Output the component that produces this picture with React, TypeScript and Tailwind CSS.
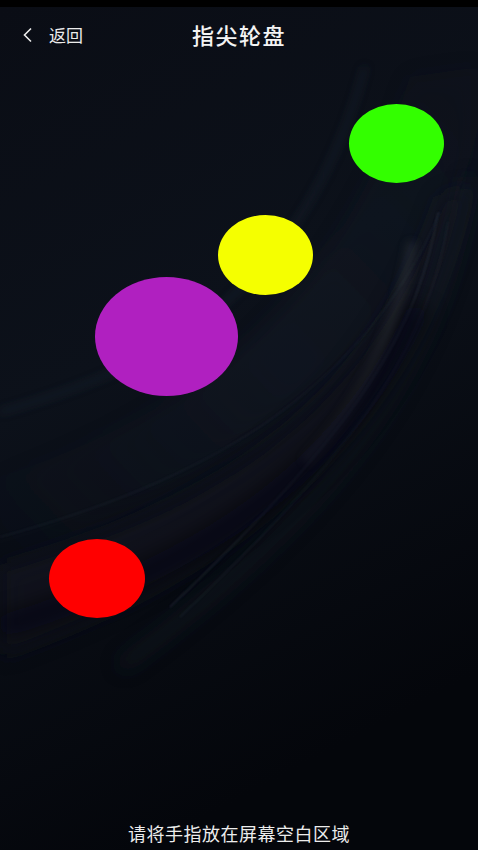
import React from "react";

const circles = [
  { cx: 396.5, cy: 143.5, w: 95, h: 79, color: "bg-[#33ff00]" },
  { cx: 265.5, cy: 255, w: 95, h: 80, color: "bg-[#f5ff00]" },
  { cx: 166.5, cy: 336.5, w: 143, h: 119, color: "bg-[#b020c0]" },
  { cx: 97, cy: 578.5, w: 96, h: 79, color: "bg-[#ff0000]" },
];

function Backdrop() {
  return (
    <svg className="absolute inset-0 w-full h-full" viewBox="0 0 478 843" preserveAspectRatio="none">
      <defs>
        <linearGradient id="bg" x1="0" y1="0" x2="0.3" y2="1">
          <stop offset="0" stopColor="#0a0d15" />
          <stop offset="0.45" stopColor="#0c111a" />
          <stop offset="1" stopColor="#04060b" />
        </linearGradient>
        <linearGradient id="band" x1="0" y1="1" x2="1" y2="0">
          <stop offset="0" stopColor="#1a2230" stopOpacity="0" />
          <stop offset="0.5" stopColor="#1a2230" stopOpacity="0.8" />
          <stop offset="1" stopColor="#141a25" stopOpacity="0.4" />
        </linearGradient>
        <filter id="blur8"><feGaussianBlur stdDeviation="10" /></filter>
        <filter id="blur3"><feGaussianBlur stdDeviation="4" /></filter>
        <filter id="blur1"><feGaussianBlur stdDeviation="1.2" /></filter>
      </defs>
      <rect width="478" height="843" fill="url(#bg)" />
      {/* broad soft bands */}
      <path d="M0 470 C 150 420, 330 330, 410 70 L 478 60 L 478 120 C 430 330, 250 470, 0 560 Z" fill="url(#band)" opacity="0.4" filter="url(#blur8)" />
      <path d="M0 560 C 200 500, 360 420, 440 190 L 470 180 C 420 420, 250 560, 0 650 Z" fill="#121824" opacity="0.55" filter="url(#blur8)" />
      {/* upper thin highlight */}
      <path d="M0 405 C 140 365, 300 300, 365 60" stroke="#232c3a" strokeWidth="4" fill="none" opacity="0.5" filter="url(#blur3)" />
      {/* middle edge */}
      <path d="M0 530 C 200 475, 360 390, 440 205" stroke="#252d3a" strokeWidth="1" fill="none" opacity="0.55" filter="url(#blur1)" />
      {/* bright gray ribbon */}
      <path d="M412 235 C 398 320, 362 395, 305 455" stroke="#373c42" strokeWidth="9" fill="none" opacity="0.45" filter="url(#blur3)" />
      <path d="M438 205 C 420 320, 360 420, 170 600" stroke="#29313c" strokeWidth="1.3" fill="none" opacity="0.7" filter="url(#blur1)" />
      <path d="M448 215 C 430 330, 370 430, 180 610" stroke="#222a35" strokeWidth="1.1" fill="none" opacity="0.6" filter="url(#blur1)" />
      <path d="M470 170 C 440 330, 380 470, 120 660" stroke="#19202b" strokeWidth="12" fill="none" opacity="0.45" filter="url(#blur8)" />
      {/* dark under-shadow */}
      <path d="M0 620 C 200 560, 340 470, 420 300" stroke="#04060a" strokeWidth="22" fill="none" opacity="0.6" filter="url(#blur8)" />
    </svg>
  );
}

export default function App() {
  return (
    <div
      className="w-[478px] h-[850px] bg-black flex flex-col overflow-hidden text-white"
      style={{ fontFamily: '"Noto Sans CJK SC", "Noto Sans", sans-serif' }}
    >
      <div className="h-[7px] bg-black shrink-0" />
      <div className="relative flex-1 flex flex-col">
        <Backdrop />
        <header className="relative h-[54px] mb-[4px] flex items-center pl-[22px]">
          <button className="flex items-center gap-[16px] text-[#ececec]">
            <svg viewBox="0 0 11 16" className="w-[11px] h-[16px] mt-[2px]" fill="none" stroke="currentColor" strokeWidth="1.6">
              <path d="M9 1.5 L2.5 8 L9 14.5" />
            </svg>
            <span className="text-[17px] leading-none">返回</span>
          </button>
          <h1 className="absolute left-0 right-0 text-center text-[22px] font-medium tracking-[1.5px] pointer-events-none text-[#f4f4f4]">
            指尖轮盘
          </h1>
        </header>
        <div className="relative flex-1">
          {circles.map((c, i) => (
            <div
              key={i}
              className={`absolute rounded-[50%] ${c.color}`}
              style={{ left: c.cx - c.w / 2, top: c.cy - c.h / 2 - 65, width: c.w, height: c.h }}
            />
          ))}
        </div>
        <p className="relative text-center text-[18px] tracking-[0.5px] leading-none text-[#ececec] pb-[8px]">
          请将手指放在屏幕空白区域
        </p>
      </div>
    </div>
  );
}
